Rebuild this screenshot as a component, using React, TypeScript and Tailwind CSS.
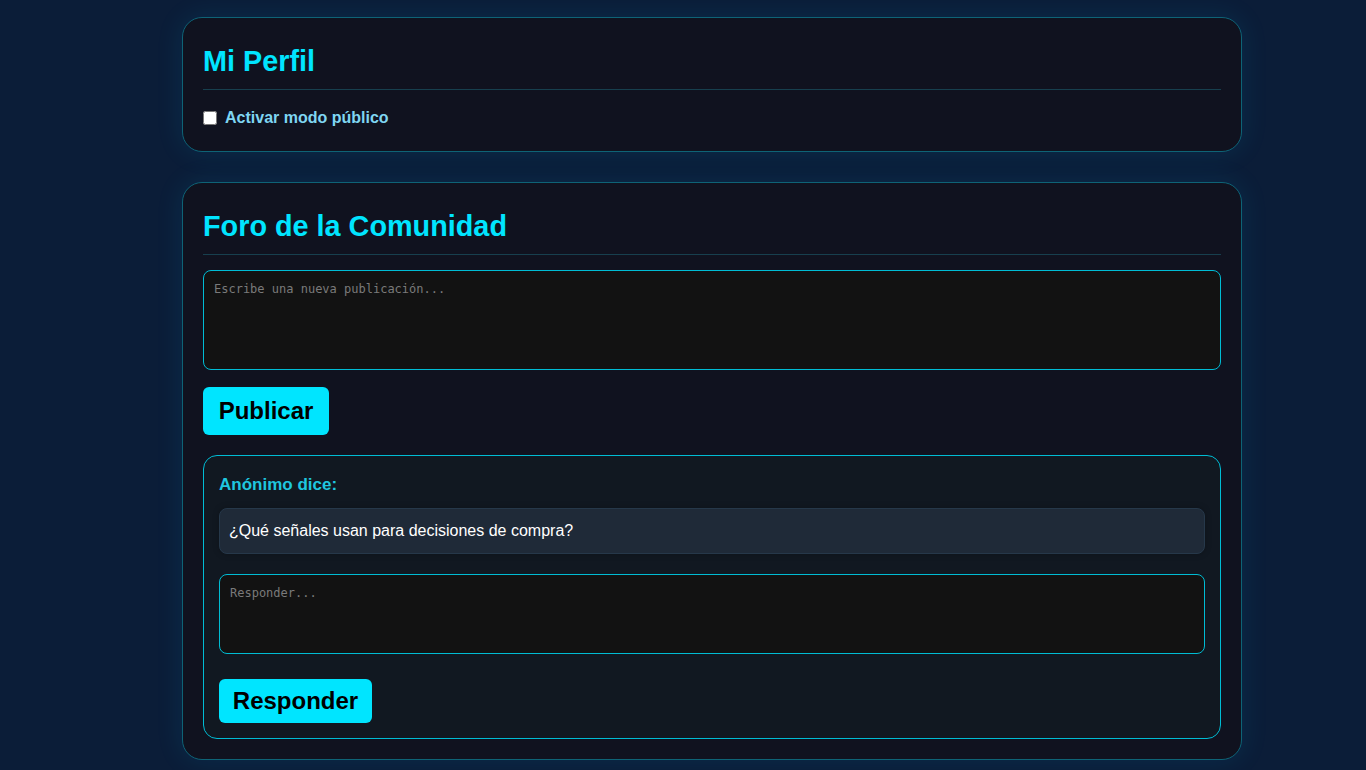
import React from "react";

export default function App() {
  return (
    <div className="h-[770px] w-[1366px] overflow-hidden bg-[#0b1d38] font-['Liberation_Sans',Arial,sans-serif]">
      <div className="flex w-[1060px] flex-col gap-[30px] pl-0 pt-[17px] ml-[182px]">
        {/* Mi Perfil */}
        <section className="rounded-[20px] border border-[#0e6376] bg-[#10121f] px-[20px] pb-[20px] pt-[20px] shadow-[0_0_28px_rgba(0,200,255,0.10)]">
          <h2 className="mt-[7px] border-b border-[#173f4e] pb-[11px] text-[28.8px] font-bold leading-[33px] text-[#00e5ff]">
            Mi Perfil
          </h2>
          <label className="mt-[18px] mb-[4px] flex h-[19px] items-center text-[16px] font-bold text-[#7fd6f2]">
            <input type="checkbox" className="m-0 mr-[8px] h-[14px] w-[14px]" />
            Activar modo público
          </label>
        </section>

        {/* Foro */}
        <section className="rounded-[20px] border border-[#0e6376] bg-[#10121f] px-[20px] pb-[20px] pt-[20px] shadow-[0_0_28px_rgba(0,200,255,0.10)]">
          <h2 className="mt-[7px] border-b border-[#173f4e] pb-[11px] text-[28.8px] font-bold leading-[33px] text-[#00e5ff]">
            Foro de la Comunidad
          </h2>
          <textarea
            placeholder="Escribe una nueva publicación..."
            className="mt-[15px] block h-[100px] w-full resize-none rounded-[8px] border border-[#00bcd4] bg-[#121212] px-[10px] pt-[11px] pb-[9px] font-['DejaVu_Sans_Mono',monospace] text-[12px] leading-[14px] text-white outline-none placeholder:text-[#7a7a7a]"
          />
          <button className="mt-[17px] flex h-[48px] w-[126px] items-center justify-center rounded-[6px] bg-[#00e5ff] text-[24px] font-bold text-black">
            Publicar
          </button>

          <div className="mt-[20px] rounded-[14px] border border-[#00bcd4] bg-[#111821] p-[15px]">
            <div className="mt-[4px] text-[17px] font-bold leading-[20px] text-[#1fc6df]">
              Anónimo dice:
            </div>
            <div className="mt-[13px] flex h-[46px] items-center rounded-[8px] border border-[#26384a] bg-[#1f2a38] px-[9px] text-[16px] text-white shadow-[0_0_6px_rgba(0,0,0,0.25)]">
              ¿Qué señales usan para decisiones de compra?
            </div>
            <textarea
              placeholder="Responder..."
              className="mt-[20px] block h-[80px] w-full resize-none rounded-[8px] border border-[#00bcd4] bg-[#121212] px-[10px] pt-[11px] pb-[9px] font-['DejaVu_Sans_Mono',monospace] text-[12px] leading-[14px] text-white outline-none placeholder:text-[#7a7a7a]"
            />
            <button className="mt-[25px] flex h-[44px] w-[153px] items-center justify-center rounded-[6px] bg-[#00e5ff] text-[24px] font-bold text-black">
              Responder
            </button>
          </div>
        </section>
      </div>
    </div>
  );
}
